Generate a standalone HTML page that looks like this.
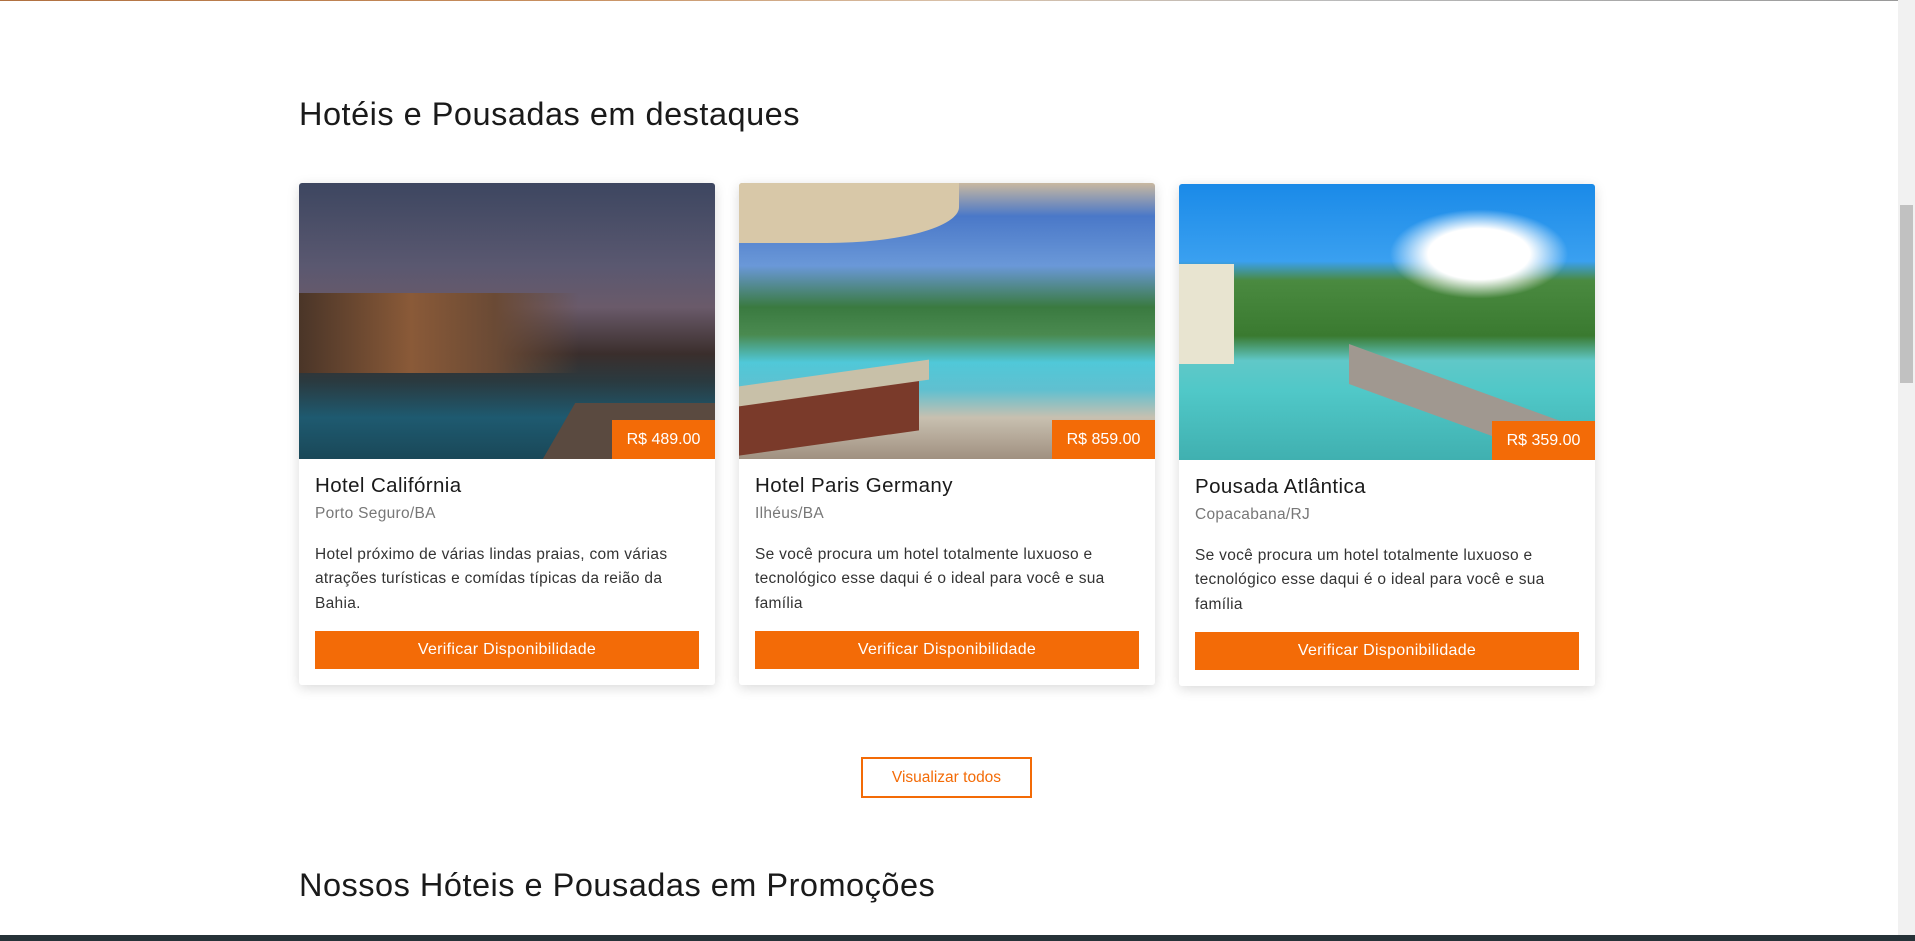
<!DOCTYPE html>
<html><head><meta charset="utf-8">
<style>
*{margin:0;padding:0;box-sizing:border-box}
html,body{width:1915px;height:941px;overflow:hidden;background:#fff;font-family:"Liberation Sans",sans-serif;color:#222}
.top{position:absolute;left:0;top:0;width:1898px;height:1px;background:linear-gradient(90deg,#b07040,#c89060 30%,#d8c0a8 50%,#bbb 70%,#999)}
h2{position:absolute;left:299px;font-weight:400;font-size:32.5px;color:#1a1a1a;letter-spacing:0.5px}
.card{position:absolute;top:183px;width:416px;height:502px;background:#fff;border-radius:3px;box-shadow:0 3px 12px rgba(0,0,0,.15);overflow:hidden}
.img{position:relative;height:276px;overflow:hidden}
.price{position:absolute;right:0;bottom:0;width:103px;height:39px;background:#f36b07;color:#fff;font-size:16px;line-height:39px;text-align:center}
.t{position:absolute;left:16px;top:473px;font-size:20.5px;color:#1a1a1a;letter-spacing:0.4px}
.loc{position:absolute;left:16px;top:322px;font-size:15.5px;color:#777;letter-spacing:0.3px}
.d{position:absolute;left:16px;top:360px;width:384px;font-size:15.5px;line-height:24.4px;color:#333;letter-spacing:0.3px}
.btn{position:absolute;left:16px;right:16px;top:448px;height:38px;background:#f36b07;color:#fff;text-align:center;line-height:38px;font-size:16px;letter-spacing:0.3px}
.all{position:absolute;left:861px;top:757px;width:171px;height:41px;border:2px solid #f36b07;color:#f36b07;text-align:center;line-height:37px;font-size:15.5px}
.sb{position:absolute;right:0;top:0;width:17px;height:935px;background:#f1f1f1}
.th{position:absolute;right:2px;top:205px;width:13px;height:178px;background:#c1c1c1}
.bot{position:absolute;left:0;top:935px;width:1915px;height:6px;background:#263238}
</style></head><body>
<div class="top"></div>
<h2 style="top:96px">Hotéis e Pousadas em destaques</h2>

<div class="card" style="left:299px">
<div class="img" style="background:linear-gradient(180deg,#3d4660 0%,#5a5870 30%,#6a5a6a 45%,#3a2e2c 62%,#2a3a40 72%,#1e5a70 85%,#1a4858 100%)">
<div style="position:absolute;left:0;top:110px;width:280px;height:80px;background:linear-gradient(90deg,#4a3528,#8a5a38 40%,#6a4a35 70%,transparent)"></div>
<div style="position:absolute;left:260px;top:220px;width:156px;height:56px;background:#5a4a40;transform:skewX(-30deg)"></div>
<div class="price">R$ 489.00</div></div>
<div class="t" style="top:291px">Hotel Califórnia</div>
<div class="loc">Porto Seguro/BA</div>
<div class="d">Hotel próximo de várias lindas praias, com várias atrações turísticas e comídas típicas da reião da Bahia.</div>
<div class="btn">Verificar Disponibilidade</div>
</div>

<div class="card" style="left:739px">
<div class="img" style="background:linear-gradient(180deg,#c9b8a0 0%,#4a78c8 12%,#6a98d8 30%,#3a7a40 45%,#4a8a50 55%,#50c8d8 65%,#60c0d0 75%,#c8c0b0 85%,#a09080 100%)">
<div style="position:absolute;left:0;top:0;width:220px;height:60px;background:#d8c8a8;border-radius:0 0 60% 0"></div>
<div style="position:absolute;left:0;top:200px;width:180px;height:60px;background:#7a3a2a;transform:skewY(-8deg)"></div>
<div style="position:absolute;left:0;top:190px;width:190px;height:20px;background:#c8c0a8;transform:skewY(-8deg)"></div>
<div class="price">R$ 859.00</div></div>
<div class="t" style="top:291px">Hotel Paris Germany</div>
<div class="loc">Ilhéus/BA</div>
<div class="d">Se você procura um hotel totalmente luxuoso e tecnológico esse daqui é o ideal para você e sua família</div>
<div class="btn">Verificar Disponibilidade</div>
</div>

<div class="card" style="left:1179px;top:184px">
<div class="img" style="background:linear-gradient(180deg,#1a8ae8 0%,#3aa0f0 28%,#4a8a40 35%,#3a7a30 55%,#60c8c8 64%,#50c8c8 75%,#40b0b0 100%)">
<div style="position:absolute;left:210px;top:25px;width:180px;height:90px;background:radial-gradient(ellipse,#fff 40%,rgba(255,255,255,0) 70%)"></div>
<div style="position:absolute;left:0;top:80px;width:55px;height:100px;background:#e8e4d0"></div>
<div style="position:absolute;left:170px;top:160px;width:250px;height:40px;background:#a09890;transform:skewY(20deg);transform-origin:left"></div>
<div class="price">R$ 359.00</div></div>
<div class="t" style="top:291px">Pousada Atlântica</div>
<div class="loc">Copacabana/RJ</div>
<div class="d">Se você procura um hotel totalmente luxuoso e tecnológico esse daqui é o ideal para você e sua família</div>
<div class="btn">Verificar Disponibilidade</div>
</div>

<div class="all">Visualizar todos</div>
<h2 style="top:867px">Nossos Hóteis e Pousadas em Promoções</h2>
<div class="sb"><div class="th"></div></div>
<div class="bot"></div>
</body></html>
